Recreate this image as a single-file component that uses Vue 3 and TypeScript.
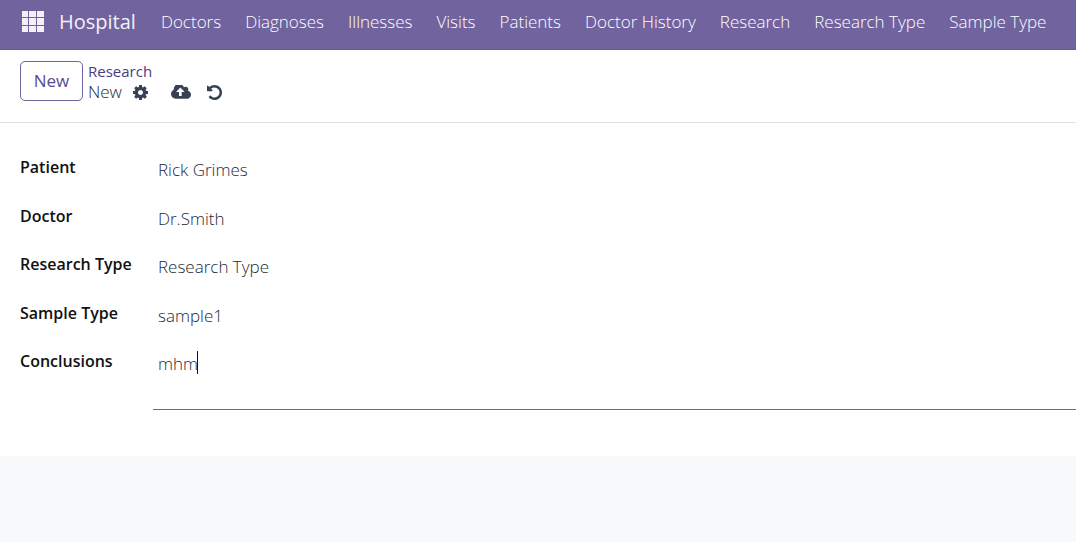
<script setup lang="ts">
import { ref } from 'vue'

interface Field {
  id: string
  label: string
  value: string
}

const menus: string[] = [
  'Doctors',
  'Diagnoses',
  'Illnesses',
  'Visits',
  'Patients',
  'Doctor History',
  'Research',
  'Research Type',
  'Sample Type',
]

const fields = ref<Field[]>([
  { id: 'patient', label: 'Patient', value: 'Rick Grimes' },
  { id: 'doctor', label: 'Doctor', value: 'Dr.Smith' },
  { id: 'research-type', label: 'Research Type', value: 'Research Type' },
  { id: 'sample-type', label: 'Sample Type', value: 'sample1' },
])

const conclusions = ref<string>('mhm')
</script>

<template>
  <div class="app">
    <header class="navbar">
      <button class="apps" type="button" aria-label="Home menu">
        <svg viewBox="0 0 22 21" width="22" height="21" fill="#f3f1f7">
          <path d="M0 0h6v6H0zM7 0h7v6H7zM15 0h7v6h-7zM0 7h6v7H0zM7 7h7v7H7zM15 7h7v7h-7zM0 15h6v6H0zM7 15h7v6H7zM15 15h7v6h-7z" />
        </svg>
      </button>
      <a class="brand" href="#">Hospital</a>
      <nav class="menu">
        <a v-for="m in menus" :key="m" href="#">{{ m }}</a>
      </nav>
    </header>

    <div class="control">
      <button class="new" type="button">New</button>
      <div class="crumbs">
        <a class="parent" href="#">Research</a>
        <div class="current">
          <span>New</span>
          <button class="icon cog" type="button" aria-label="Actions">
            <svg viewBox="128 128 1536 1536" width="15" height="15" fill="currentColor">
              <path d="M1152 896q0-106-75-181t-181-75-181 75-75 181 75 181 181 75 181-75 75-181zm512-109v222q0 12-8 23t-20 13l-185 28q-19 54-39 91 35 50 107 138 10 12 10 25t-9 23q-27 37-99 108t-94 71q-12 0-26-9l-138-108q-44 23-91 38-16 136-29 186-7 28-36 28h-222q-14 0-24.500-8.500t-11.500-21.500l-28-184q-49-16-90-37l-141 107q-10 9-25 9-14 0-25-11-126-114-165-168-7-10-7-23 0-12 8-23 15-21 51-66.500t54-70.500q-27-50-41-99l-183-27q-13-2-21-12.500t-8-23.500v-222q0-12 8-23t19-13l186-28q14-46 39-92-40-57-107-138-10-12-10-24 0-10 9-23 26-36 98.500-107.500t94.500-71.500q13 0 26 10l138 107q44-23 91-38 16-136 29-186 7-28 36-28h222q14 0 24.500 8.500t11.500 21.500l28 184q49 16 90 37l142-107q9-9 24-9 13 0 25 10 129 119 165 170 7 8 7 22 0 12-8 23-15 21-51 66.500t-54 70.500q26 50 41 98l183 28q13 2 21 12.500t8 23.500z" />
            </svg>
          </button>
          <button class="icon cloud" type="button" aria-label="Save manually">
            <svg viewBox="0 256 1920 1280" width="20" height="14" fill="currentColor">
              <path d="M1280 864q0-14-9-23l-352-352q-9-9-23-9t-23 9l-351 351q-10 12-10 24 0 14 9 23t23 9h224v352q0 13 9.500 22.500t22.500 9.500h192q13 0 22.500-9.500t9.500-22.500v-352h224q13 0 22.500-9.500t9.500-22.500zm640 288q0 159-112.500 271.500t-271.500 112.500h-1088q-185 0-316.500-131.500t-131.500-316.500q0-130 70-240t188-165q-2-30-2-43 0-212 150-362t362-150q156 0 285.500 87t188.500 231q71-62 166-62 106 0 181 75t75 181q0 76-41 138 130 31 213.500 135.500t83.500 238.500z" />
            </svg>
          </button>
          <button class="icon undo" type="button" aria-label="Discard changes">
            <svg viewBox="128 128 1536 1536" width="15" height="15" fill="currentColor">
              <path d="M1664 896q0 156-61 298t-164 245-245 164-298 61q-172 0-327-72.500t-264-204.500q-7-10-6.500-22.500t8.500-20.500l137-138q10-9 25-9 16 2 23 12 73 95 179 147t225 52q104 0 198.500-40.500t163.500-109.500 109.500-163.500 40.500-198.500-40.500-198.500-109.500-163.500-163.500-109.500-198.500-40.500q-98 0-188 35.500t-160 101.500l137 138q31 30 14 69-17 40-59 40h-448q-26 0-45-19t-19-45v-448q0-42 40-59 39-17 69 14l130 129q107-101 244.500-156.500t284.500-55.500q156 0 298 61t245 164 164 245 61 298z" />
            </svg>
          </button>
        </div>
      </div>
    </div>

    <form class="sheet" @submit.prevent>
      <template v-for="f in fields" :key="f.id">
        <label :for="f.id">{{ f.label }}</label>
        <input :id="f.id" v-model="f.value" type="text" autocomplete="off" />
      </template>
      <label for="conclusions">Conclusions</label>
      <div class="area">
        <textarea id="conclusions" v-model="conclusions" spellcheck="false"></textarea>
        <span class="caret"></span>
      </div>
    </form>
  </div>
</template>

<style>
body {
  background: #f8f9fb;
}
</style>

<style scoped>
.app {
  font-family: 'Open Sans', 'Noto Sans', sans-serif;
  font-size: 17px;
  line-height: 24px;
  color: #1f2937;
}
button,
input,
textarea {
  font: inherit;
  color: inherit;
  margin: 0;
  padding: 0;
  border: 0;
  background: none;
  outline: 0;
}
button {
  cursor: pointer;
}
a {
  text-decoration: none;
}
svg {
  display: block;
}
.navbar {
  display: flex;
  align-items: center;
  box-sizing: border-box;
  height: 50px;
  padding: 0 22px 6px;
  background: #71639e;
  border-bottom: 1px solid #665a8e;
}
.brand {
  margin-left: 15px;
  font-size: 20px;
  color: #f3f1f7;
}
.menu {
  display: flex;
  gap: 24px;
  margin-left: 25px;
  white-space: nowrap;
}
.menu a {
  font-weight: 300;
  color: #fff;
}
.control {
  display: flex;
  align-items: flex-start;
  gap: 5px;
  padding: 11px 20px 19px;
  background: #fff;
  border-bottom: 1px solid #dee2e6;
}
.new {
  box-sizing: border-box;
  width: 63px;
  height: 40px;
  border: 1px solid #71639e;
  border-radius: 5px;
  font-size: 17px;
  font-weight: 500;
  color: #5c4a91;
}
.parent {
  display: block;
  font-size: 15px;
  font-weight: 500;
  line-height: 20px;
  color: #4b3a82;
}
.current {
  display: flex;
  align-items: center;
  line-height: 22px;
}
.current span {
  width: 35px;
  font-weight: 300;
}
.icon {
  color: #374151;
}
.cog {
  margin-left: 10px;
}
.cloud {
  margin-left: 23px;
}
.undo {
  margin-left: 16px;
}
.sheet {
  display: grid;
  grid-template-columns: 133px 1fr;
  grid-template-rows: 49px 48px 49px 48px auto;
  align-items: start;
  padding: 32px 0 46px 20px;
  background: #fff;
}
.sheet label {
  font-size: 16px;
  font-weight: 600;
  color: #111;
}
.sheet input,
.sheet textarea {
  display: block;
  box-sizing: border-box;
  width: 100%;
  padding: 3px 5px 0;
  font-weight: 300;
}
.area {
  position: relative;
}
.sheet textarea {
  height: 61px;
  border-bottom: 1px solid #71639e;
  resize: none;
  overflow: hidden;
}
.caret {
  position: absolute;
  left: 44px;
  top: 2px;
  width: 1px;
  height: 23px;
  background: #111;
}
</style>
